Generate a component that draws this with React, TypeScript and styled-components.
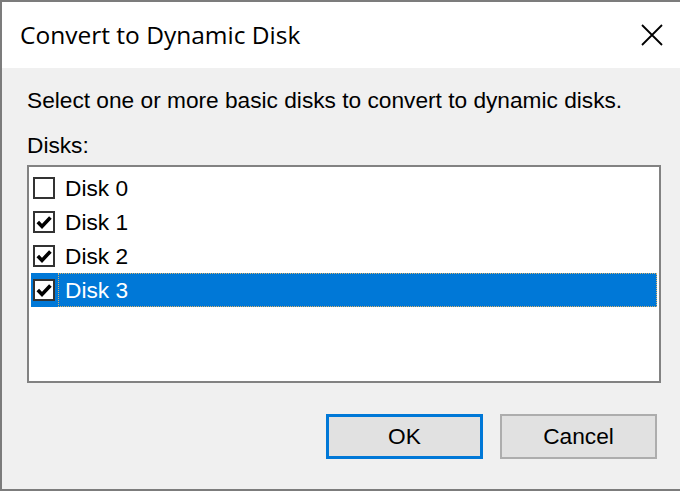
import React from 'react';
import styled, { createGlobalStyle } from 'styled-components';

const GlobalStyle = createGlobalStyle`
  html, body {
    margin: 0;
    padding: 0;
    width: 680px;
    height: 491px;
    overflow: hidden;
    background: #f0f0f0;
  }
  * {
    box-sizing: border-box;
  }
`;

const Window = styled.div`
  width: 680px;
  height: 491px;
  display: flex;
  flex-direction: column;
  border-top: 2px solid #7c7c7c;
  border-left: 2px solid #7c7c7c;
  border-bottom: 2px solid #7c7c7c;
  background: #f0f0f0;
  font-family: 'Liberation Sans', Arial, sans-serif;
  color: #000;
`;

const TitleBar = styled.div`
  height: 66px;
  flex: none;
  display: flex;
  align-items: center;
  justify-content: space-between;
  background: #ffffff;
  padding: 0 17px 0 18px;
`;

const Title = styled.span`
  font-family: 'Open Sans', 'Noto Sans', sans-serif;
  font-size: 24.5px;
  color: #000;
  line-height: 30px;
`;

const CloseButton = styled.button`
  width: 22px;
  height: 22px;
  padding: 0;
  border: none;
  background: transparent;
  display: flex;
  align-items: center;
  justify-content: center;
`;

const Body = styled.div`
  flex: 1;
  display: flex;
  flex-direction: column;
  padding: 19px 19px 0 25px;
`;

const Text = styled.div<{ $gap?: number }>`
  font-size: 22.7px;
  line-height: 26px;
  height: 26px;
  margin-top: ${({ $gap }) => $gap ?? 0}px;
  white-space: nowrap;
`;

const ListBox = styled.div`
  margin-top: 7px;
  height: 218px;
  background: #ffffff;
  border: 2px solid #828282;
  padding: 4px 2px;
  display: flex;
  flex-direction: column;
`;

const Row = styled.div<{ $selected?: boolean }>`
  height: 34px;
  flex: none;
  display: flex;
  align-items: center;
  padding-left: 2px;
  background: ${({ $selected }) => ($selected ? '#0078d7' : 'transparent')};
`;

const CheckBox = styled.span`
  width: 22px;
  height: 22px;
  flex: none;
  border: 2px solid #333333;
  background: #ffffff;
  display: flex;
  align-items: center;
  justify-content: center;
`;

const RowLabel = styled.span<{ $selected?: boolean }>`
  flex: 1;
  height: 34px;
  margin-left: 3px;
  padding-left: 6px;
  font-size: 22.7px;
  line-height: 32px;
  color: ${({ $selected }) => ($selected ? '#ffffff' : '#000000')};
  border: 1px dotted ${({ $selected }) => ($selected ? '#d9b26b' : 'transparent')};
`;

const ButtonRow = styled.div`
  margin-top: 31px;
  margin-right: 4px;
  display: flex;
  justify-content: flex-end;
  gap: 17px;
`;

const Button = styled.button<{ $default?: boolean }>`
  width: 157px;
  height: 45px;
  padding: 0;
  font-family: 'Liberation Sans', Arial, sans-serif;
  font-size: 22.7px;
  color: #000;
  background: #e1e1e1;
  border: 2px solid ${({ $default }) => ($default ? '#0078d7' : '#adadad')};
  box-shadow: ${({ $default }) => ($default ? 'inset 0 0 0 1px #0078d7' : 'none')};
`;

const disks = [
  { name: 'Disk 0', checked: false },
  { name: 'Disk 1', checked: true },
  { name: 'Disk 2', checked: true },
  { name: 'Disk 3', checked: true },
];

const CheckMark = () => (
  <svg width="16" height="16" viewBox="0 0 16 16">
    <path d="M1.8 8 L6 12.4 L14.4 3.4" fill="none" stroke="#000" strokeWidth="3.6" />
  </svg>
);

export default function App() {
  const selected = 3;
  return (
    <>
      <GlobalStyle />
      <Window>
        <TitleBar>
          <Title>Convert to Dynamic Disk</Title>
          <CloseButton aria-label="Close">
            <svg width="22" height="22" viewBox="0 0 22 22">
              <path d="M1 1 L21 21 M21 1 L1 21" stroke="#000" strokeWidth="1.8" />
            </svg>
          </CloseButton>
        </TitleBar>
        <Body>
          <Text>Select one or more basic disks to convert to dynamic disks.</Text>
          <Text $gap={19}>Disks:</Text>
          <ListBox>
            {disks.map((d, i) => (
              <Row key={d.name} $selected={i === selected}>
                <CheckBox>{d.checked && <CheckMark />}</CheckBox>
                <RowLabel $selected={i === selected}>{d.name}</RowLabel>
              </Row>
            ))}
          </ListBox>
          <ButtonRow>
            <Button $default>OK</Button>
            <Button>Cancel</Button>
          </ButtonRow>
        </Body>
      </Window>
    </>
  );
}
